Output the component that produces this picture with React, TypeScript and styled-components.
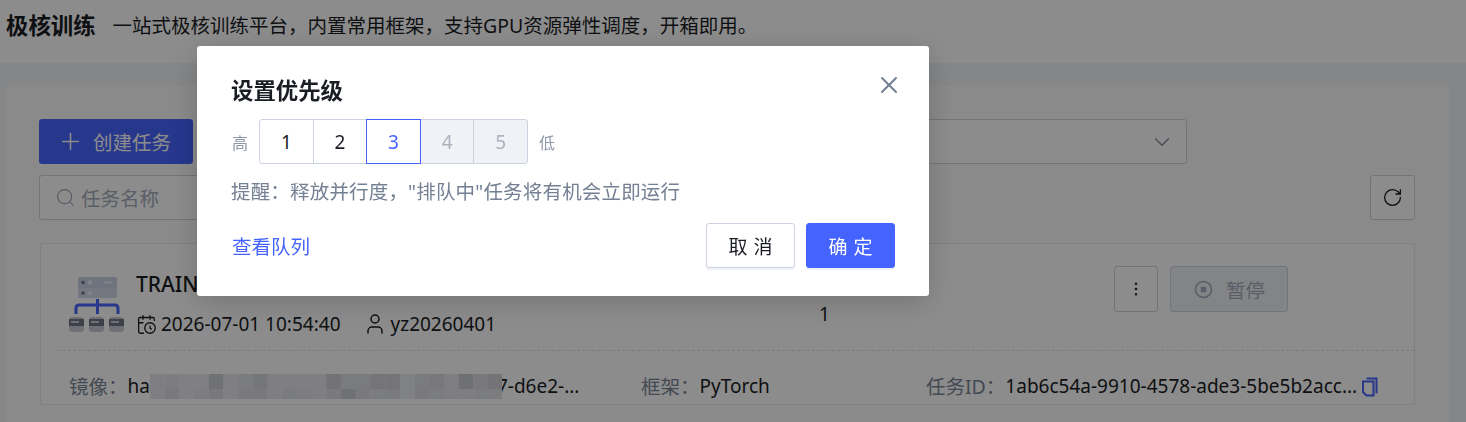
import styled, { createGlobalStyle } from 'styled-components';
import { CalendarClock, ChevronDown, EllipsisVertical, Plus, RotateCw, Search, User, X } from 'lucide-react';

const GlobalStyle = createGlobalStyle`
  html, body {
    margin: 0;
    height: 422px;
    overflow: hidden;
    background: #fff;
  }
  body {
    font-family: "Noto Sans", "Noto Sans CJK SC", sans-serif;
    color: #1a1d24;
  }
  * {
    box-sizing: border-box;
  }
`;

const Header = styled.header`
  height: 63px;
  display: flex;
  align-items: center;
  gap: 17px;
  padding: 0 6px 14px;
  background: #fff;
`;

const PageTitle = styled.h1`
  margin: 0;
  font-size: 22.4px;
  font-weight: 700;
`;

const PageDesc = styled.p`
  margin: 0;
  font-size: 19.5px;
`;

const Main = styled.main`
  padding: 22px 17px 0 6px;
  background: #f1f4f8;
`;

const Panel = styled.section`
  height: 340px;
  padding: 34px 34px 0 33px;
  background: #fbfcfd;
`;

const Toolbar = styled.div`
  display: flex;
  align-items: center;
  justify-content: space-between;
  margin-bottom: 11px;
`;

const CreateButton = styled.button`
  width: 154px;
  height: 45px;
  display: flex;
  align-items: center;
  gap: 9px;
  padding: 0 0 0 18px;
  border: 0;
  border-radius: 3px;
  background: #4564ff;
  color: #fff;
  font: inherit;
  font-size: 19.5px;
`;

const SelectBox = styled.div`
  width: 587px;
  height: 45px;
  margin: 0 228px 0 auto;
  display: flex;
  align-items: center;
  justify-content: flex-end;
  padding-right: 11px;
  border: 1px solid #ccd3e0;
  border-radius: 3px;
  background: #fff;
  color: #7d8799;
`;

const SearchBox = styled.div`
  width: 320px;
  height: 45px;
  display: flex;
  align-items: center;
  gap: 5px;
  padding-left: 15px;
  border: 1px solid #ccd3e0;
  border-radius: 3px;
  background: #fff;
  color: #a4acba;
  font-size: 19.5px;
`;

const IconButton = styled.button`
  width: 45px;
  height: 45px;
  display: flex;
  align-items: center;
  justify-content: center;
  padding: 0;
  border: 1px solid #ccd3e0;
  border-radius: 3px;
  background: #fff;
  color: #1a1d24;
`;

const TaskCard = styled.article`
  margin: 23px 0 0 1px;
  height: 162px;
  padding-left: 17px;
  border: 1px solid #e6e9ef;
  border-radius: 3px;
  background: #fff;
`;

const TaskTop = styled.div`
  height: 107px;
  display: grid;
  grid-template-columns: 750px 295px auto;
  padding: 22px 0 0 11px;
  border-bottom: 1px dashed #dfe3ea;
`;

const TaskIdentity = styled.div`
  display: flex;
  gap: 11px;
  padding-top: 5px;
`;

const IconSlot = styled.div`
  padding-top: 6px;
`;

const TaskInfo = styled.div`
  display: flex;
  flex-direction: column;
  gap: 13px;
`;

const TaskName = styled.div`
  font-size: 21px;
  font-weight: 500;
  line-height: 27px;
`;

const MetaRow = styled.div`
  display: flex;
  align-items: center;
  gap: 22px;
  font-size: 19px;
  line-height: 26px;
`;

const MetaItem = styled.span`
  display: flex;
  align-items: center;
  gap: 4px;
`;

const Count = styled.div`
  padding-top: 35px;
  font-size: 19px;
  line-height: 26px;
`;

const Actions = styled.div`
  display: flex;
  gap: 12px;
`;

const MoreButton = styled(IconButton)`
  width: 44px;
  height: 46px;
`;

const PauseButton = styled.button`
  width: 118px;
  height: 46px;
  display: flex;
  align-items: center;
  justify-content: center;
  gap: 13px;
  padding: 0 0 0 1px;
  border: 1px solid #ccd3e0;
  border-radius: 3px;
  background: #eef0f5;
  color: #a4acba;
  font: inherit;
  font-size: 19.5px;
`;

const TaskBottom = styled.div`
  height: 53px;
  display: grid;
  grid-template-columns: 572px 285px auto;
  padding: 18px 0 0 11px;
  font-size: 19px;
  line-height: 27px;
`;

const Field = styled.div`
  display: flex;
  align-items: center;
  white-space: nowrap;
`;

const FieldLabel = styled.span`
  color: #7d8799;
  font-size: 19.5px;
`;

const CopyIcon = styled.svg`
  margin-left: 5px;
  color: #4564ff;
`;

const MosaicWrap = styled.span`
  display: inline-flex;
  position: relative;
  z-index: 1;
  margin-right: -5px;
`;

const Overlay = styled.div`
  position: fixed;
  inset: 0;
  z-index: 2;
  padding: 46px 0 0 197px;
  background: rgba(0, 0, 0, 0.45);
`;

const Modal = styled.div`
  position: relative;
  width: 732px;
  height: 250px;
  padding: 29px 34px 0 35px;
  border-radius: 3px;
  background: #fff;
  box-shadow: 0 6px 30px rgba(0, 0, 0, 0.18);
`;

const CloseButton = styled.button`
  position: absolute;
  top: 25px;
  right: 26px;
  display: flex;
  padding: 0;
  border: 0;
  background: none;
  color: #748093;
`;

const ModalTitle = styled.h2`
  margin: 0 0 13px -1px;
  font-size: 22.4px;
  line-height: 31px;
  font-weight: 700;
`;

const PriorityRow = styled.div`
  display: flex;
  align-items: center;
  gap: 11px;
  color: #8f98a8;
  font-size: 16px;
`;

const Segments = styled.div`
  display: flex;
  height: 45px;
  border-radius: 3px;
`;

const Segment = styled.button<{ $selected?: boolean; $disabled?: boolean }>`
  width: 54.6px;
  height: 45px;
  margin-left: -1px;
  padding: 0;
  border: 1px solid ${({ $selected }) => ($selected ? '#4564ff' : '#ccd3e0')};
  background: ${({ $disabled }) => ($disabled ? '#f0f2f7' : '#fff')};
  color: ${({ $selected, $disabled }) => ($selected ? '#4564ff' : $disabled ? '#adb3bf' : '#1a1d24')};
  font: inherit;
  font-size: 19px;
  position: relative;
  z-index: ${({ $selected }) => ($selected ? 1 : 0)};

  &:first-child {
    margin-left: 0;
    border-radius: 3px 0 0 3px;
  }

  &:last-child {
    border-radius: 0 3px 3px 0;
  }
`;

const Hint = styled.p`
  margin: 14px 0 0 -1px;
  color: #748093;
  font-size: 19.5px;
  line-height: 27px;
  letter-spacing: 0.18px;
`;

const ModalFooter = styled.div`
  margin-top: 18px;
  display: flex;
  align-items: center;
  justify-content: space-between;
`;

const QueueLink = styled.a`
  color: #4564ff;
  font-size: 19.5px;
`;

const FooterButtons = styled.div`
  display: flex;
  gap: 11px;
`;

const FooterButton = styled.button<{ $primary?: boolean }>`
  width: 89px;
  height: 45px;
  padding: 0;
  border: 1px solid ${({ $primary }) => ($primary ? '#4564ff' : '#ccd3e0')};
  border-radius: 3px;
  background: ${({ $primary }) => ($primary ? '#4564ff' : '#fff')};
  color: ${({ $primary }) => ($primary ? '#fff' : '#1a1d24')};
  box-shadow: 0 2px 0 rgba(70, 90, 160, 0.08);
  font: inherit;
  font-size: 19px;
  letter-spacing: 6px;
  text-indent: 6px;
`;

// final on-screen greys of the pixelated strip, undone from the 45% overlay
const MOSAIC_TOP = [127, 126, 129, 129, 114, 128, 125, 119, 128, 128, 128, 128, 116, 124, 124, 118, 118, 130, 124, 121, 127, 113, 122, 117];
const MOSAIC_BOTTOM = [128, 122, 129, 126, 122, 129, 123, 123, 128, 124, 126, 128, 123, 114, 123, 125, 124, 130, 123, 125, 127, 127, 125, 125];

function mosaicFill(level: number) {
  const v = Math.min(252, Math.round(level / 0.55));
  return `rgb(${v - 2},${v - 1},${v + 3})`;
}

function Mosaic() {
  return (
    <MosaicWrap>
      <svg width="352" height="25" viewBox="0 0 352 25">
        {MOSAIC_TOP.map((level, i) => (
          <rect key={i} x={i * 14.7} y="0" width="14.8" height="15" fill={mosaicFill(level)} />
        ))}
        {MOSAIC_BOTTOM.map((level, i) => (
          <rect key={i} x={i * 14.7} y="15" width="14.8" height="10" fill={mosaicFill(level)} />
        ))}
      </svg>
    </MosaicWrap>
  );
}

function Disk({ x }: { x: number }) {
  return (
    <g>
      <rect x={x} y="40" width="15" height="15" rx="3.5" fill="#c8ccd8" />
      <rect x={x} y="42" width="15" height="7" fill="#6f7686" />
      <rect x={x + 2} y="44" width="8" height="2" fill="#c9cedb" />
    </g>
  );
}

function ClusterIcon() {
  return (
    <svg width="56" height="55" viewBox="0 0 56 55">
      <rect x="9" y="0" width="39" height="11" rx="1.5" fill="#cbd2e6" />
      <rect x="9" y="11" width="39" height="10" rx="1.5" fill="#d3d9ea" />
      <circle cx="14" cy="5.5" r="1.8" fill="#6f7686" />
      <circle cx="21" cy="5.5" r="2.2" fill="#eef0f7" />
      <circle cx="14" cy="16" r="1.8" fill="#6f7686" />
      <circle cx="21" cy="16" r="2.2" fill="#eef0f7" />
      <rect x="35" y="4.5" width="8" height="2" fill="#eef0f7" />
      <path d="M7 37v-6a3 3 0 0 1 3-3h36a3 3 0 0 1 3 3v6M28.500 22v15" fill="none" stroke="#4564ff" strokeWidth="3" />
      <Disk x={0} />
      <Disk x={20} />
      <Disk x={40} />
    </svg>
  );
}

function PauseIcon() {
  return (
    <svg width="19" height="19" viewBox="0 0 19 19">
      <circle cx="9.500" cy="9.500" r="8" fill="none" stroke="currentColor" strokeWidth="1.6" />
      <rect x="6.800" y="6.800" width="5.400" height="5.400" fill="currentColor" />
    </svg>
  );
}

export default function App() {
  return (
    <>
      <GlobalStyle />
      <Header>
        <PageTitle>极核训练</PageTitle>
        <PageDesc>一站式极核训练平台，内置常用框架，支持GPU资源弹性调度，开箱即用。</PageDesc>
      </Header>
      <Main>
        <Panel>
          <Toolbar>
            <CreateButton>
              <Plus size={27} strokeWidth={1.4} />
              创建任务
            </CreateButton>
            <SelectBox>
              <ChevronDown size={26} strokeWidth={1.1} />
            </SelectBox>
          </Toolbar>
          <Toolbar>
            <SearchBox>
              <Search size={21} strokeWidth={1.4} />
              任务名称
            </SearchBox>
            <IconButton>
              <RotateCw size={21} strokeWidth={1.5} />
            </IconButton>
          </Toolbar>
          <TaskCard>
            <TaskTop>
              <TaskIdentity>
                <IconSlot>
                  <ClusterIcon />
                </IconSlot>
                <TaskInfo>
                  <TaskName>TRAIN</TaskName>
                  <MetaRow>
                    <MetaItem>
                      <CalendarClock size={21} strokeWidth={1.5} />
                      2026-07-01 10:54:40
                    </MetaItem>
                    <MetaItem>
                      <User size={24} strokeWidth={1.5} />
                      yz20260401
                    </MetaItem>
                  </MetaRow>
                </TaskInfo>
              </TaskIdentity>
              <Count>1</Count>
              <Actions>
                <MoreButton>
                  <EllipsisVertical size={18} strokeWidth={1.5} />
                </MoreButton>
                <PauseButton>
                  <PauseIcon />
                  暂停
                </PauseButton>
              </Actions>
            </TaskTop>
            <TaskBottom>
              <Field>
                <FieldLabel>镜像：</FieldLabel>
                ha
                <Mosaic />
                7-d6e2-...
              </Field>
              <Field>
                <FieldLabel>框架：</FieldLabel>
                PyTorch
              </Field>
              <Field>
                <FieldLabel>任务ID：</FieldLabel>
                1ab6c54a-9910-4578-ade3-5be5b2acc...
                <CopyIcon width="16" height="20" viewBox="0 0 16 20" fill="none" stroke="currentColor" strokeWidth="2">
                  <path d="M4.500 1.500h10v15" />
                  <path d="M1 4.500h10.500v14h-7l-3.500-3.500z" />
                </CopyIcon>
              </Field>
            </TaskBottom>
          </TaskCard>
        </Panel>
      </Main>
      <Overlay>
        <Modal>
          <CloseButton aria-label="关闭">
            <X size={28} strokeWidth={1.75} />
          </CloseButton>
          <ModalTitle>设置优先级</ModalTitle>
          <PriorityRow>
            高
            <Segments>
              <Segment>1</Segment>
              <Segment>2</Segment>
              <Segment $selected>3</Segment>
              <Segment $disabled>4</Segment>
              <Segment $disabled>5</Segment>
            </Segments>
            低
          </PriorityRow>
          <Hint>提醒：释放并行度，"排队中"任务将有机会立即运行</Hint>
          <ModalFooter>
            <QueueLink>查看队列</QueueLink>
            <FooterButtons>
              <FooterButton>取消</FooterButton>
              <FooterButton $primary>确定</FooterButton>
            </FooterButtons>
          </ModalFooter>
        </Modal>
      </Overlay>
    </>
  );
}
